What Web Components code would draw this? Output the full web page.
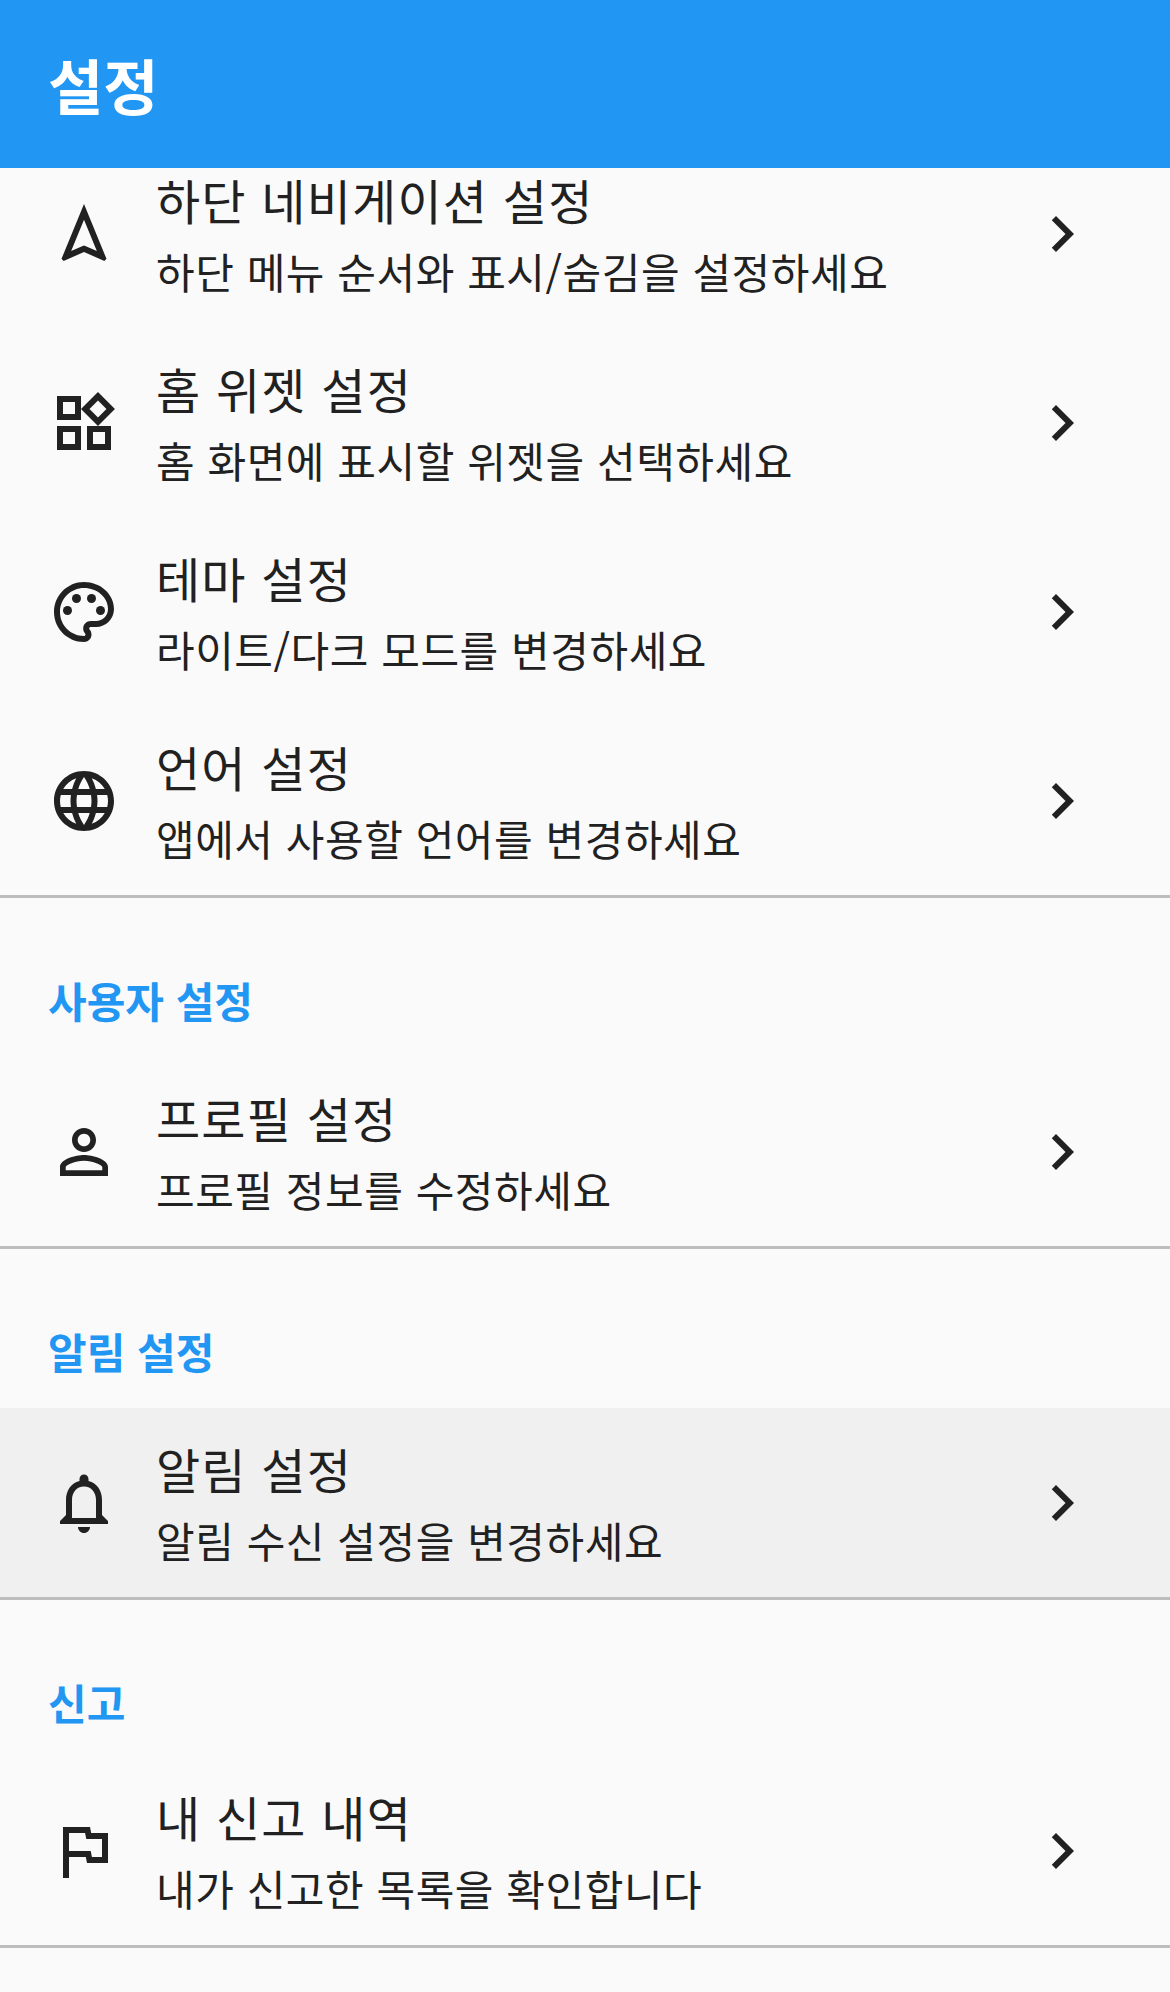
<!DOCTYPE html>
<html lang="ko">
<head>
<meta charset="utf-8">
<title>설정</title>
<style>
  html, body { margin: 0; background: #fafafa; }
  body { font-family: "Noto Sans CJK KR", "Noto Sans", sans-serif; color: #212121; height: 1992px; overflow: hidden; }
</style>
</head>
<body>
<settings-page></settings-page>

<script>
const ICONS = {
  navigation: '<path d="M12 7.27l4.28 10.43-3.47-1.53-.81-.36-.81.36-3.47 1.53L12 7.27M12 2L4.5 20.29l.71.71L12 18l6.79 3 .71-.71L12 2z"/>',
  widgets: '<path d="M16.66 4.52l2.83 2.83-2.83 2.83-2.83-2.83 2.83-2.83M9 5v4H5V5h4m10 10v4h-4v-4h4M9 15v4H5v-4h4m7.66-13.31L11 7.34 16.66 13l5.66-5.66-5.66-5.65zM11 3H3v8h8V3zm10 10h-8v8h8v-8zm-10 0H3v8h8v-8z"/>',
  palette: '<path d="M12 22C6.49 22 2 17.51 2 12S6.49 2 12 2s10 4.04 10 9c0 3.31-2.69 6-6 6h-1.77c-.28 0-.5.22-.5.5 0 .12.05.23.13.33.41.47.64 1.06.64 1.67 0 1.38-1.12 2.5-2.5 2.5zm0-18c-4.41 0-8 3.59-8 8s3.59 8 8 8c.28 0 .5-.22.5-.5 0-.16-.08-.28-.14-.35-.41-.46-.63-1.05-.63-1.65 0-1.38 1.12-2.5 2.5-2.5H16c2.21 0 4-1.79 4-4 0-3.86-3.59-7-8-7z"/><circle cx="6.5" cy="11.5" r="1.5"/><circle cx="9.5" cy="7.5" r="1.5"/><circle cx="14.5" cy="7.5" r="1.5"/><circle cx="17.5" cy="11.5" r="1.5"/>',
  language: '<path d="M11.99 2C6.47 2 2 6.48 2 12s4.47 10 9.99 10C17.52 22 22 17.52 22 12S17.52 2 11.99 2zm6.93 6h-2.95c-.32-1.25-.78-2.45-1.38-3.56 1.84.63 3.37 1.91 4.33 3.56zM12 4.04c.83 1.2 1.48 2.53 1.91 3.96h-3.82c.43-1.43 1.08-2.76 1.91-3.96zM4.26 14C4.1 13.36 4 12.69 4 12s.1-1.36.26-2h3.38c-.08.66-.14 1.32-.14 2s.06 1.34.14 2H4.26zm.82 2h2.95c.32 1.25.78 2.45 1.38 3.56-1.84-.63-3.37-1.9-4.33-3.56zm2.95-8H5.08c.96-1.66 2.49-2.93 4.33-3.56C8.81 5.55 8.35 6.75 8.03 8zM12 19.96c-.83-1.2-1.48-2.53-1.91-3.96h3.82c-.43 1.43-1.08 2.76-1.91 3.96zM14.34 14H9.66c-.09-.66-.16-1.32-.16-2s.07-1.35.16-2h4.68c.09.65.16 1.32.16 2s-.07 1.34-.16 2zm.25 5.56c.6-1.11 1.06-2.31 1.38-3.56h2.95c-.96 1.65-2.49 2.93-4.33 3.56zM16.36 14c.08-.66.14-1.32.14-2s-.06-1.34-.14-2h3.38c.16.64.26 1.31.26 2s-.1 1.36-.26 2h-3.38z"/>',
  person: '<path d="M12 5.9c1.16 0 2.1.94 2.1 2.1s-.94 2.1-2.1 2.1S9.9 9.16 9.9 8s.94-2.1 2.1-2.1m0 9c2.97 0 6.1 1.46 6.1 2.1v1.1H5.9V17c0-.64 3.13-2.1 6.1-2.1M12 4C9.79 4 8 5.79 8 8s1.79 4 4 4 4-1.79 4-4-1.79-4-4-4zm0 9c-2.67 0-8 1.34-8 4v3h16v-3c0-2.66-5.33-4-8-4z"/>',
  bell: '<path d="M12 22c1.1 0 2-.9 2-2h-4c0 1.1.9 2 2 2zm6-6v-5c0-3.07-1.63-5.64-4.5-6.32V4c0-.83-.67-1.5-1.5-1.5s-1.5.67-1.5 1.5v.68C7.64 5.36 6 7.92 6 11v5l-2 2v1h16v-1l-2-2zm-2 1H8v-6c0-2.48 1.51-4.5 4-4.5s4 2.02 4 4.5v6z"/>',
  flag: '<path d="M12.36 6l.4 2H18v6h-3.36l-.4-2H7V6h5.36M14 4H5v17h2v-7h5.6l.4 2h7V6h-5.6L14 4z"/>',
  chevron: '<path d="M10 6L8.59 7.41 13.17 12l-4.58 4.59L10 18l6-6z"/>'
};

function iconSvg(name) {
  return `<svg class="icon" viewBox="0 0 24 24" width="72" height="72" fill="#212121">${ICONS[name]}</svg>`;
}

class AppHeader extends HTMLElement {
  constructor() {
    super();
    this.attachShadow({ mode: 'open' });
  }

  connectedCallback() {
    this.shadowRoot.innerHTML = `
      <style>
        :host {
          display: flex;
          align-items: center;
          position: relative;
          z-index: 1;
          height: 168px;
          padding: 0 0 2px 48px;
          box-sizing: border-box;
          background: #2196f3;
          color: #fff;
          font-size: 60px;
          font-weight: 700;
        }
      </style>
      <slot></slot>
    `;
  }
}

class SectionHeader extends HTMLElement {
  constructor() {
    super();
    this.attachShadow({ mode: 'open' });
  }

  connectedCallback() {
    this.shadowRoot.innerHTML = `
      <style>
        :host {
          display: block;
          height: 159px;
          padding: 72px 48px 0;
          box-sizing: border-box;
          color: #2196f3;
          font-size: 42px;
          line-height: 60px;
          font-weight: 700;
        }
        :host([short]) { height: 157px; }
      </style>
      <slot></slot>
    `;
  }
}

class SettingsItem extends HTMLElement {
  constructor() {
    super();
    this.attachShadow({ mode: 'open' });
  }

  connectedCallback() {
    const active = this.hasAttribute('active');
    this.shadowRoot.innerHTML = `
      <style>
        :host {
          display: flex;
          align-items: center;
          height: 189px;
          padding: 0 72px 0 48px;
          background: ${active ? '#f0f0f0' : 'transparent'};
        }
        :host([short]) { height: 188px; }
        .icon { display: block; flex: none; }
        .text { flex: 1; min-width: 0; margin-left: 36px; padding-bottom: 4px; }
        .title { font-size: 48px; line-height: 72px; letter-spacing: 1.2px; white-space: nowrap; margin-bottom: 6px; }
        .sub { font-size: 42px; line-height: 60px; letter-spacing: 0.54px; white-space: nowrap; }
      </style>
      ${iconSvg(this.getAttribute('icon'))}
      <div class="text">
        <div class="title">${this.getAttribute('title')}</div>
        <div class="sub">${this.getAttribute('sub')}</div>
      </div>
      ${iconSvg('chevron')}
    `;
  }
}

class SettingsDivider extends HTMLElement {
  constructor() {
    super();
    this.attachShadow({ mode: 'open' });
  }

  connectedCallback() {
    this.shadowRoot.innerHTML = `
      <style>
        :host { display: block; height: 3px; background: #bdbdbd; }
      </style>
    `;
  }
}

class SettingsPage extends HTMLElement {
  constructor() {
    super();
    this.attachShadow({ mode: 'open' });
  }

  connectedCallback() {
    this.shadowRoot.innerHTML = `
      <style>
        :host { display: block; height: 1992px; overflow: hidden; }
        .scroll { margin-top: -29px; }
      </style>
      <app-header>설정</app-header>
      <div class="scroll">
        <settings-item icon="navigation" title="하단 네비게이션 설정" sub="하단 메뉴 순서와 표시/숨김을 설정하세요"></settings-item>
        <settings-item icon="widgets" title="홈 위젯 설정" sub="홈 화면에 표시할 위젯을 선택하세요"></settings-item>
        <settings-item icon="palette" title="테마 설정" sub="라이트/다크 모드를 변경하세요"></settings-item>
        <settings-item icon="language" title="언어 설정" sub="앱에서 사용할 언어를 변경하세요"></settings-item>
        <settings-divider></settings-divider>
        <section-header>사용자 설정</section-header>
        <settings-item icon="person" title="프로필 설정" sub="프로필 정보를 수정하세요"></settings-item>
        <settings-divider></settings-divider>
        <section-header>알림 설정</section-header>
        <settings-item icon="bell" active title="알림 설정" sub="알림 수신 설정을 변경하세요"></settings-item>
        <settings-divider></settings-divider>
        <section-header short>신고</section-header>
        <settings-item icon="flag" short title="내 신고 내역" sub="내가 신고한 목록을 확인합니다"></settings-item>
        <settings-divider></settings-divider>
      </div>
    `;
  }
}

customElements.define('app-header', AppHeader);
customElements.define('section-header', SectionHeader);
customElements.define('settings-item', SettingsItem);
customElements.define('settings-divider', SettingsDivider);
customElements.define('settings-page', SettingsPage);
</script>
</body>
</html>
